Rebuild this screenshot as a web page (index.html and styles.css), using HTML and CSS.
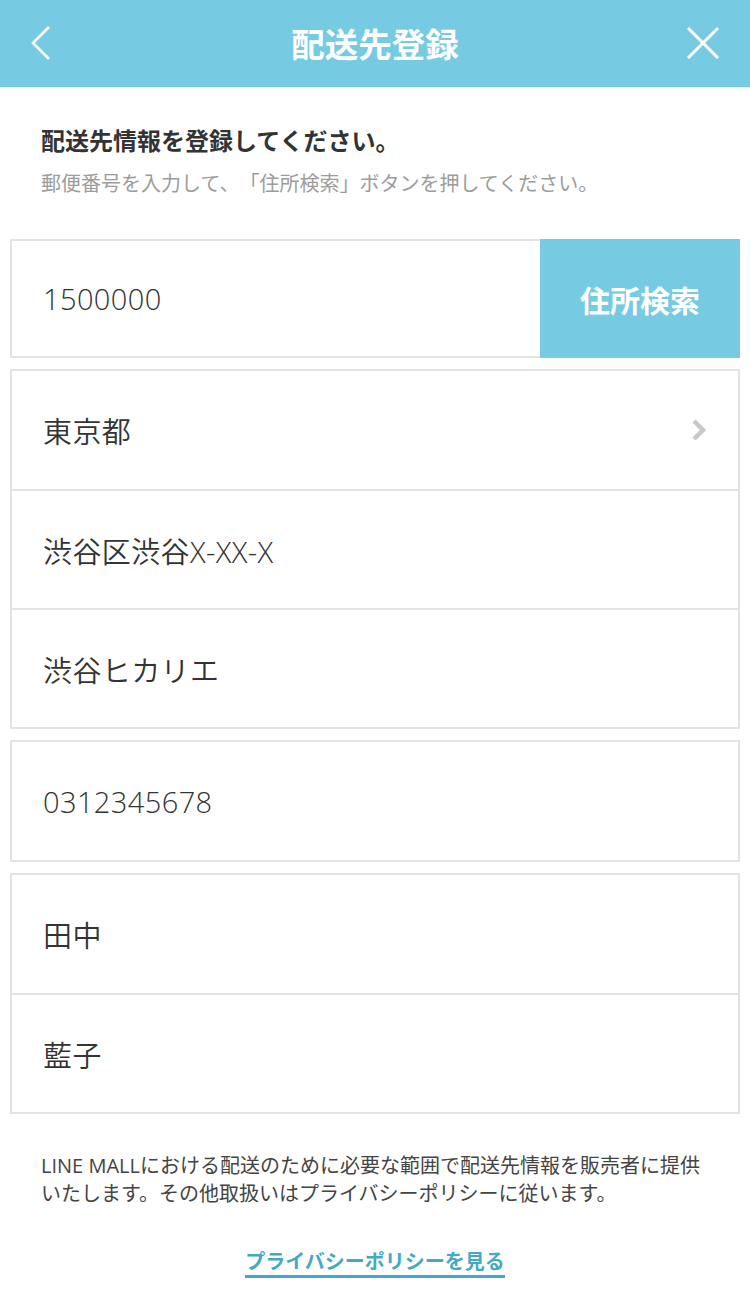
FILE: index.html
```html
<!DOCTYPE html>
<html lang="ja">
<head>
<meta charset="utf-8">
<title>配送先登録</title>
<link rel="stylesheet" href="styles.css">
</head>
<body>
<header class="topbar">
  <a class="topbar-back" aria-label="戻る">
    <svg width="22" height="36" viewBox="0 0 22 36"><polyline points="19,2 3,18 19,34" fill="none" stroke="#fff" stroke-width="2.6" stroke-linejoin="miter"/></svg>
  </a>
  <h1 class="topbar-title">配送先登録</h1>
  <a class="topbar-close" aria-label="閉じる">
    <svg width="34" height="34" viewBox="0 0 34 34"><path d="M2 2 L32 32 M32 2 L2 32" fill="none" stroke="#fff" stroke-width="3"/></svg>
  </a>
</header>

<main class="content">
  <section class="intro">
    <p class="intro-title">配送先情報を登録してください。</p>
    <p class="intro-sub">郵便番号を入力して、「住所検索」ボタンを押してください。</p>
  </section>

  <div class="zip-box">
    <div class="field">1500000</div>
    <button class="zip-button">住所検索</button>
  </div>

  <div class="group">
    <div class="field field-select">
      <span>東京都</span>
      <svg class="chevron" width="18" height="24" viewBox="0 0 18 24"><polyline points="4,3 13,12 4,21" fill="none" stroke="#c9c9c9" stroke-width="4.5"/></svg>
    </div>
    <div class="field">渋谷区渋谷X-XX-X</div>
    <div class="field">渋谷ヒカリエ</div>
  </div>

  <div class="group">
    <div class="field">0312345678</div>
  </div>

  <div class="group">
    <div class="field">田中</div>
    <div class="field">藍子</div>
  </div>

  <p class="notice">LINE MALLにおける配送のために必要な範囲で配送先情報を販売者に提供<br>いたします。その他取扱いはプライバシーポリシーに従います。</p>

  <div class="policy">
    <a class="policy-link">プライバシーポリシーを見る</a>
  </div>
</main>
</body>
</html>
```

FILE: styles.css
```css
* { box-sizing: border-box; }

html, body {
  margin: 0;
  padding: 0;
  background: #fff;
}

body {
  font-family: "Open Sans", "Noto Sans CJK JP", sans-serif;
  color: #333;
  text-spacing-trim: space-all;
}

.topbar {
  height: 87px;
  background: #76cbe2;
  display: grid;
  grid-template-columns: 1fr auto 1fr;
  align-items: center;
  padding: 0 30px 0 30px;
}

.topbar-back {
  justify-self: start;
  display: flex;
  margin-top: -2px;
}

.topbar-close {
  justify-self: end;
  display: flex;
  margin-top: -2px;
}

.topbar-title {
  margin: 0;
  font-family: "Noto Sans CJK JP", sans-serif;
  font-size: 33.5px;
  font-weight: 700;
  color: #fff;
  line-height: 40px;
  margin-top: -2px;
}

.intro {
  padding: 38px 41px 0;
}

.intro-title {
  margin: 0;
  font-family: "Noto Sans CJK JP", sans-serif;
  font-size: 24px;
  line-height: 30px;
  font-weight: 700;
  color: #333;
}

.intro-sub {
  margin: 15px 0 0;
  font-family: "Noto Sans CJK JP", sans-serif;
  font-size: 20px;
  line-height: 26px;
  color: #9c9c9c;
  white-space: nowrap;
}

.zip-box {
  margin: 43px 10px 0;
  height: 119px;
  border: 2px solid #e3e3e3;
  display: flex;
}

.zip-box .field {
  flex: 1;
  height: auto;
}

.zip-button {
  width: 200px;
  margin: -2px -2px -2px 0;
  border: 0;
  background: #76cbe2;
  color: #fff;
  font-family: "Noto Sans CJK JP", sans-serif;
  font-size: 30px;
  font-weight: 700;
  padding: 0;
}

.group {
  margin: 11px 10px 0;
  border: 2px solid #e3e3e3;
  display: flex;
  flex-direction: column;
}

.field {
  height: 118px;
  display: flex;
  align-items: center;
  padding: 0 30px 0 31px;
  font-size: 29px;
  font-weight: 350;
  letter-spacing: 0.4px;
  color: #333;
}

.group .field + .field {
  border-top: 2px solid #e3e3e3;
  height: 119px;
}

.field-select {
  justify-content: space-between;
}

.chevron {
  margin-right: 0;
}

.notice {
  margin: 38px 0 0;
  padding: 0 20px 0 41px;
  font-size: 20px;
  line-height: 28px;
  color: #444;
  white-space: nowrap;
}

.policy {
  margin-top: 39px;
  display: flex;
  justify-content: center;
}

.policy-link {
  font-family: "Noto Sans CJK JP", sans-serif;
  font-size: 20px;
  line-height: 28px;
  font-weight: 700;
  color: #43aac5;
  border-bottom: 3px solid #43aac5;
  text-decoration: none;
}
```
